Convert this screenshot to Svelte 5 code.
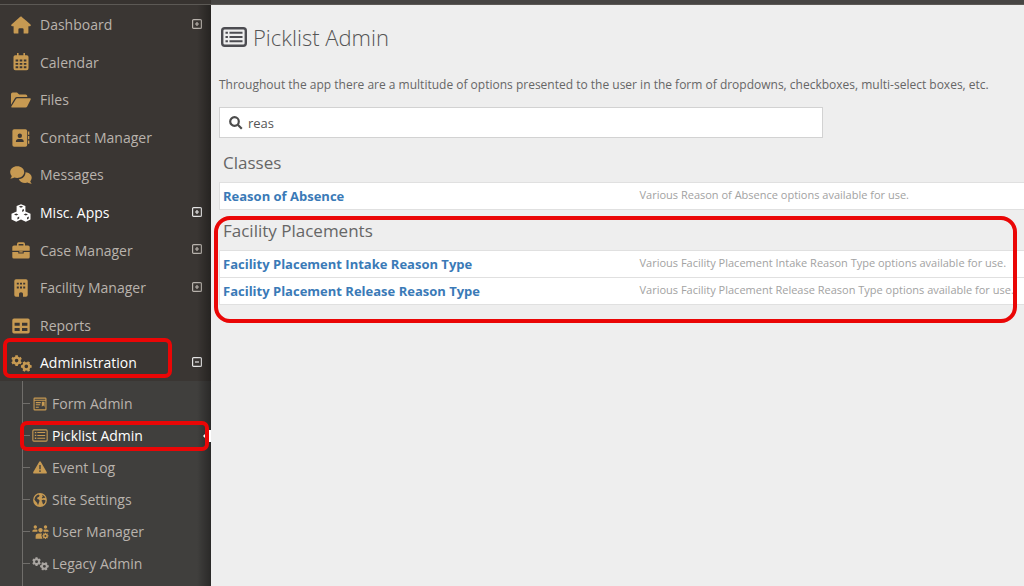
<script lang="ts">
  type NavItem = { label: string; icon: string; expandable?: boolean; bright?: boolean };

  const nav: NavItem[] = [
    { label: "Dashboard", icon: "home", expandable: true },
    { label: "Calendar", icon: "calendar" },
    { label: "Files", icon: "folder" },
    { label: "Contact Manager", icon: "contacts" },
    { label: "Messages", icon: "comments" },
    { label: "Misc. Apps", icon: "cubes", expandable: true, bright: true },
    { label: "Case Manager", icon: "briefcase", expandable: true },
    { label: "Facility Manager", icon: "building", expandable: true },
    { label: "Reports", icon: "table" },
  ];

  const adminNav: NavItem[] = [
    { label: "Form Admin", icon: "form" },
    { label: "Picklist Admin", icon: "list" },
    { label: "Event Log", icon: "warning" },
    { label: "Site Settings", icon: "globe" },
    { label: "User Manager", icon: "users" },
    { label: "Legacy Admin", icon: "cogs" },
  ];

  const groups = [
    { title: "Classes", lists: ["Reason of Absence"] },
    {
      title: "Facility Placements",
      marked: true,
      lists: ["Facility Placement Intake Reason Type", "Facility Placement Release Reason Type"],
    },
  ];

  let query = $state("reas");
  let adminOpen = $state(true);
  let current = $state("Picklist Admin");

  const visible = $derived(
    groups
      .map((g) => ({ ...g, lists: g.lists.filter((l) => l.toLowerCase().includes(query.toLowerCase())) }))
      .filter((g) => g.lists.length > 0),
  );

  // Toothed wheel with a round hole, drawn with fill-rule evenodd.
  function gear(cx: number, cy: number, r: number, teeth: number, turn = 0): string {
    const pts: string[] = [];
    const step = (Math.PI * 2) / teeth;
    for (let i = 0; i < teeth; i++) {
      const a = i * step + turn;
      for (const [da, k] of [[-0.3, 0.78], [-0.22, 1], [0.22, 1], [0.3, 0.78]]) {
        const x = cx + Math.cos(a + da * step) * r * k;
        const y = cy + Math.sin(a + da * step) * r * k;
        pts.push(`${x.toFixed(2)} ${y.toFixed(2)}`);
      }
    }
    const h = r * 0.33;
    return `M${pts.join("L")}ZM${cx - h} ${cy}a${h} ${h} 0 1 0 ${h * 2} 0a${h} ${h} 0 1 0 ${-h * 2} 0Z`;
  }

  const icons: Record<string, { w: number; h: number; d: string }> = {
    home: { w: 20, h: 18, d: "M10 .3 12.2 2.2 15 4.6 19.5 8.6Q20.3 10 18.8 10.2H17.4V16.4Q17.4 17.6 16.2 17.6H12.6V13.4Q12.6 12.2 11.4 12.2H8.6Q7.4 12.2 7.4 13.4V17.6H3.8Q2.6 17.6 2.6 16.4V10.2H1.2Q-.3 10 .5 8.6L9.2.8Q10 0 10.8.8Z" },
    calendar: { w: 16, h: 18, d: "M4 0h1.6v2.2h4.8V0H12v2.2h1.8q1.7 0 1.7 1.7V15.3q0 1.9-1.9 1.9H2.4Q.5 17.2.5 15.3V3.9q0-1.7 1.7-1.7H4ZM2.6 6.4v2h2.6v-2ZM6.7 6.4v2h2.6v-2ZM10.8 6.4v2h2.6v-2ZM2.6 9.9v1.9h2.6V9.9ZM6.7 9.9v1.9h2.6V9.9ZM10.8 9.9v1.9h2.6V9.9ZM2.6 13.3v1.9h2.6v-1.9ZM6.7 13.3v1.9h2.6v-1.9ZM10.8 13.3v1.9h2.6v-1.9Z" },
    folder: { w: 20, h: 16, d: "M0 2.2Q0 .5 1.7.5H6l2.2 2h6.4q1.7 0 1.7 1.7v.9H6Q4.6 5.1 3.9 6.3L0 12.8ZM5 6.9Q5.4 6.2 6.2 6.2h12.7q1.3 0 .8 1.2l-3.5 7q-.5 1-1.6 1H1.2q-1.3 0-.7-1.1Z" },
    contacts: { w: 18, h: 18, d: "M2.2.3h11.2q1.8 0 1.8 1.8v13.8q0 1.8-1.8 1.8H2.2Q.4 17.7.4 15.9V2.1Q.4.3 2.2.3ZM7.8 4.6a2.2 2.2 0 1 0 0 4.4a2.2 2.2 0 1 0 0-4.4ZM3.9 13.1h7.8v-.6q0-2.5-2.5-2.5H6.4q-2.5 0-2.5 2.5ZM16 2.6h1.3v3.2H16ZM16 7.1h1.3v3.2H16ZM16 11.6h1.3v3.2H16Z" },
    comments: { w: 22, h: 18, d: "M7.2.2c4 0 7 2.6 7 5.8s-3 5.9-7 5.9c-1.1 0-2.1-.2-3-.5C3.1 12.1 1.7 12.6.2 12.6c.8-.8 1.4-1.6 1.5-2.7C.8 8.9.2 7.5.2 6 .2 2.8 3.2.2 7.2.2ZM15.5 6.2c3.5.2 6.2 2.5 6.2 5.4 0 1.5-.6 2.7-1.5 3.7.2 1 .8 1.8 1.5 2.4-1.6.1-3-.4-4-1.1-.8.3-1.7.5-2.6.5-3 0-5.4-1.5-6.3-3.8 3.9-.4 6.9-3.4 6.7-7.1Z" },
    cubes: { w: 20, h: 18, d: "M10 .2 14.4 2.1V7.6L19.5 9.8V15.4L14.8 17.7 10 15.5 5.2 17.7.5 15.4V9.8L5.6 7.6V2.1ZM10 1.8 7.8 2.8 10 3.8 12.2 2.8ZM11.2 5.8V7.9L12.9 7.1V5ZM5.2 9.5 3 10.5 5.2 11.5 7.4 10.5ZM6.4 13.4V15.5L8.2 14.6V12.6ZM14.8 9.5 12.6 10.5 14.8 11.5 17 10.5ZM16 13.4V15.5L17.8 14.6V12.6Z" },
    briefcase: { w: 18, h: 17, d: "M5 3.4V1.9Q5 .3 6.6.3h4.8Q13 .3 13 1.9v1.5h3q1.7 0 1.7 1.7v3.6H.3V5.1Q.3 3.4 2 3.4ZM6.6 3.4h4.8V1.9H6.6ZM.3 9.9h6v1.5h5.4V9.9h6v5q0 1.5-1.5 1.5H1.8Q.3 16.4.3 14.9ZM7.3 9.3h3.4v1.2H7.3Z" },
    building: { w: 14, h: 18, d: "M2 .3h10q1.7 0 1.7 1.7v14q0 1.7-1.7 1.7H9V14.7q0-1.5-2-1.5t-2 1.5v3H2Q.3 17.7.3 16V2Q.3.3 2 .3ZM2.8 3.8v1.8h2V3.8ZM6 3.8v1.8h2V3.8ZM9.2 3.8v1.8h2V3.8ZM2.8 7.6v1.8h2V7.6ZM6 7.6v1.8h2V7.6ZM9.2 7.6v1.8h2V7.6Z" },
    table: { w: 18, h: 16, d: "M2 .5h14q1.7 0 1.7 1.7v11.6q0 1.7-1.7 1.7H2Q.3 15.5.3 13.8V2.2Q.3.5 2 .5ZM2.6 4.8v3h5.1v-3ZM10 4.8v3h5.4v-3ZM2.6 10v3h5.1v-3ZM10 10v3h5.4v-3Z" },
    form: { w: 14, h: 14, d: "M1.8.5h10.4q1.3 0 1.3 1.3v10.4q0 1.3-1.3 1.3H1.8Q.5 13.5.5 12.2V1.8Q.5.5 1.8.5ZM1.6 1.7v1h10.8v-1ZM1.6 3.7v8.6h10.8V3.7ZM2.8 5h5v1.2h-5ZM8.8 4.8h2.8v5l-1.4-1.2-1.4 1.2ZM2.8 7.3h4.4v1H2.8ZM2.8 9.7h3v1h-3Z" },
    list: { w: 16, h: 13, d: "M1.9.3h12.2q1.6 0 1.6 1.6v9.2q0 1.6-1.6 1.6H1.9Q.3 12.7.3 11.1V1.9Q.3.3 1.9.3ZM1.9 1.4q-.5 0-.5.5v9.2q0 .5.5.5h12.2q.5 0 .5-.5V1.9q0-.5-.5-.5ZM2.8 3h1.5v1.3H2.8ZM5.3 3.1h7.9v1H5.3ZM2.8 5.8h1.5v1.3H2.8ZM5.3 5.9h7.9v1H5.3ZM2.8 8.6h1.5v1.3H2.8ZM5.3 8.7h7.9v1H5.3Z" },
    warning: { w: 14, h: 13, d: "M6.1.9Q7 -.4 7.9.9L13.7 11q.6 1.5-1 1.6H1.3Q-.3 12.5.3 11ZM6.3 4v4.2h1.4V4ZM7 9.2a.9.9 0 1 0 0 1.8a.9.9 0 1 0 0-1.8Z" },
    globe: { w: 14, h: 14, d: "M7 .1a6.9 6.9 0 1 0 0 13.8A6.9 6.9 0 1 0 7 .1ZM5.2 1.6 6.6 2.2 6 3.8 4.4 4.6 4.2 6 5.8 6.4 6.6 7.8 6 9.6 5 12.2 4 9.8 2.6 8.2 1.4 6.4 2.2 4 3.6 2.4ZM9 1.7 11.2 2.9 12.4 5 10.8 4.8 9.6 5.6 8.8 4.8 9.8 3.6ZM9.2 7 10.8 6.7 12.6 7.6 12 9.8 10.4 11.4 9.4 10 9.4 8.8 8.4 8Z" },
    users: { w: 17, h: 14, d: "M3.3.3a1.7 1.7 0 1 0 .01 0ZM13.5.3a1.7 1.7 0 1 0 .01 0ZM8.5 3a2.2 2.2 0 1 0 .01 0ZM.2 6.7Q.2 4.4 2.5 4.4H4.5L5.5 5 5.3 6.7ZM11.7 6.7 11.5 5 12.5 4.4H14.5Q16.8 4.4 16.8 6.7ZM3.6 13.7V11.6Q3.6 8.4 6.4 8.4H10L9.4 10.5 10.5 13.7Z" + gear(13.4, 10.9, 3.1, 8) },
    cogs: { w: 21, h: 17, d: gear(5.6, 5.6, 5.5, 6, 0.52) + gear(15.3, 11.4, 5.5, 6, 0) },
  };
</script>

{#snippet icon(name: string)}
  <svg
    class="glyph"
    viewBox="0 0 {icons[name].w} {icons[name].h}"
    width={icons[name].w}
    height={icons[name].h}
    aria-hidden="true"
  >
    <path fill-rule="evenodd" d={icons[name].d} />
  </svg>
{/snippet}

{#snippet toggleBox(open: boolean)}
  <svg viewBox="0 0 10 10" width="10" height="10" aria-hidden="true">
    <rect class="box" x=".6" y=".6" width="8.8" height="8.8" rx="1" />
    <path class="box" d={open ? "M3 5h4" : "M3 5h4M5 3v4"} />
  </svg>
{/snippet}

<div class="app">
  <header class="topbar"></header>

  <aside class="sidebar">
    <nav aria-label="Main">
      <ul class="menu">
        {#each nav as item}
          <li class="item" class:bright={item.bright}>
            <a href="#{item.icon}">
              <span class="icon">{@render icon(item.icon)}</span>
              {item.label}
            </a>
            {#if item.expandable}
              <button class="toggle" aria-label="Expand {item.label}">{@render toggleBox(false)}</button>
            {/if}
          </li>
        {/each}
        <li class="item open">
          <a href="#administration">
            <span class="icon">{@render icon("cogs")}</span>
            Administration
          </a>
          <button
            class="toggle"
            aria-label="Toggle Administration"
            aria-expanded={adminOpen}
            onclick={() => (adminOpen = !adminOpen)}
          >
            {@render toggleBox(adminOpen)}
          </button>
          <span class="mark mark-parent"></span>
        </li>
      </ul>
      {#if adminOpen}
        <ul class="submenu">
          {#each adminNav as item}
            <li class="subitem" class:current={item.label === current} class:legacy={item.icon === "cogs"}>
              <a href="#{item.icon}" onclick={() => (current = item.label)}>
                <span class="icon">{@render icon(item.icon)}</span>
                {item.label}
              </a>
              {#if item.label === current}
                <svg class="pointer" viewBox="0 0 8 14" width="8" height="14" aria-hidden="true">
                  <path d="M0 7 6 1h2v12H6Z" />
                </svg>
                <span class="mark mark-child"></span>
              {/if}
            </li>
          {/each}
        </ul>
      {/if}
    </nav>
  </aside>

  <main>
    <h1>
      <svg class="title-icon" viewBox="0 0 26 20" width="26" height="20" aria-hidden="true">
        <rect x="1.2" y="1.2" width="23.6" height="17.6" rx="2.5" />
        <path d="M4.5 5.8h2.4M4.5 10h2.4M4.5 14.2h2.4M8.5 5.8h13M8.5 10h13M8.5 14.2h13" />
      </svg>
      Picklist Admin
    </h1>
    <p class="intro">
      Throughout the app there are a multitude of options presented to the user in the form of dropdowns, checkboxes,
      multi-select boxes, etc.
    </p>

    <label class="search">
      <svg viewBox="0 0 14 14" width="14" height="14" aria-hidden="true">
        <circle cx="5.5" cy="5.5" r="4.3" />
        <path d="M8.8 8.8 12.8 12.8" />
      </svg>
      <input type="text" aria-label="Search picklists" bind:value={query} />
    </label>

    {#each visible as group}
      <section class:marked={group.marked}>
        <h2>{group.title}</h2>
        <ul class="lists">
          {#each group.lists as name}
            <li>
              <a href="#picklist">{name}</a>
              <span>Various {name} options available for use.</span>
            </li>
          {/each}
        </ul>
      </section>
    {/each}
  </main>
</div>

<style>
  :global(body) {
    background: #eeeeee;
  }
  .app {
    --gold: #c79a52;
    --red: #ea0606;
    display: grid;
    grid-template-columns: 211px minmax(0, 1fr);
    grid-template-rows: 5px 1fr;
    min-height: 100vh;
    overflow: hidden;
    font-family: "Open Sans", "Noto Sans", sans-serif;
    font-size: 13px;
    color: #666;
  }
  ul {
    list-style: none;
    margin: 0;
    padding: 0;
  }
  a {
    text-decoration: none;
  }
  .topbar {
    grid-column: 1 / -1;
    box-sizing: border-box;
    background: linear-gradient(to right, #373330 211px, #474543 211px);
    border-bottom: 1px solid #5c5955;
  }
  .sidebar {
    position: relative;
    background: #3a3633;
    font-size: 14px;
  }
  /* shade along the right edge */
  .sidebar::after {
    content: "";
    position: absolute;
    inset: 0 0 0 auto;
    width: 14px;
    background: linear-gradient(to right, transparent, rgba(0, 0, 0, 0.35));
    pointer-events: none;
  }
  nav {
    display: flex;
    flex-direction: column;
    min-height: 100%;
  }
  .item {
    position: relative;
    display: flex;
    align-items: center;
    line-height: 1.4;
  }
  .item a {
    flex: 1;
    display: flex;
    align-items: center;
    padding: 10px 0 8px 10px;
    color: #b9b3ad;
  }
  .item .icon {
    width: 22px;
    margin-right: 8px;
  }
  .icon {
    display: flex;
    justify-content: center;
    align-items: center;
    height: 18px;
    flex: none;
  }
  .glyph {
    fill: var(--gold);
    flex: none;
  }
  .item.bright a,
  .item.open a {
    color: #fff;
  }
  .bright .glyph {
    fill: #fff;
  }
  .toggle {
    display: flex;
    margin: 0 9px 0 0;
    padding: 0;
    border: 0;
    background: none;
    cursor: pointer;
  }
  .box {
    fill: none;
    stroke: #b9b3ad;
    stroke-width: 1.2;
  }
  .bright .box,
  .open .box {
    stroke: #e6e6e6;
  }
  .submenu {
    position: relative;
    flex: 1;
    padding: 7px 0 6px;
    background: #403f3d;
  }
  .submenu::before {
    content: "";
    position: absolute;
    inset: 0 auto 0 22px;
    width: 1px;
    background: #706e6b;
  }
  .subitem {
    position: relative;
    line-height: 20px;
  }
  .subitem::before {
    content: "";
    position: absolute;
    left: 23px;
    top: 15px;
    width: 7px;
    height: 1px;
    background: #706e6b;
  }
  .subitem a {
    display: flex;
    align-items: center;
    padding: 6px 0 6px 31px;
    color: #b9b3ad;
  }
  .subitem.current a {
    color: #fff;
  }
  .subitem .icon {
    width: 18px;
    margin-right: 3px;
  }
  .legacy .glyph {
    width: 17px;
    height: 14px;
    fill: #a9a5a1;
  }
  .pointer {
    position: absolute;
    right: 0;
    top: 9px;
    fill: #fff;
    z-index: 1;
  }
  .mark {
    position: absolute;
    z-index: 2;
    box-sizing: border-box;
    border: 4px solid var(--red);
    border-radius: 7px;
    pointer-events: none;
  }
  .mark-parent {
    inset: -5px 39px 3px 3px;
  }
  .mark-child {
    inset: 1px 2px 1px 20px;
  }
  main {
    padding: 14px 0 16px 8px;
  }
  h1,
  h2 {
    margin: 0;
    font-weight: 400;
  }
  h1 {
    display: flex;
    align-items: center;
    gap: 6px;
    padding-left: 2px;
    font-size: 22px;
    font-weight: 300;
    line-height: 36px;
    color: #555;
  }
  .title-icon {
    fill: none;
    stroke: #4c4c51;
    stroke-width: 2.4;
  }
  .title-icon path {
    stroke-width: 2;
  }
  .intro {
    margin: 20px 0 12px;
    font-size: 12px;
    line-height: 20px;
  }
  .search {
    display: flex;
    align-items: center;
    gap: 5px;
    box-sizing: border-box;
    width: 75%;
    height: 31px;
    padding: 0 9px;
    background: #fff;
    border: 1px solid #d2d2d2;
  }
  .search svg {
    flex: none;
    fill: none;
    stroke: #4c4c4c;
    stroke-width: 2.2;
  }
  .search input {
    flex: 1;
    min-width: 0;
    padding: 0;
    border: 0;
    outline: 0;
    background: none;
    font: inherit;
    color: #555;
  }
  section {
    position: relative;
  }
  .search + section {
    margin-top: 4px;
  }
  h2 {
    padding: 1px 0 0 4px;
    font-size: 17px;
    line-height: 39px;
  }
  .lists {
    border: 1px solid #e0e0e0;
    border-right: 0;
    background: #fff;
  }
  .lists li {
    display: grid;
    grid-template-columns: 52% 1fr;
    align-items: start;
    padding-left: 3px;
    line-height: 26px;
  }
  .lists li + li {
    border-top: 1px solid #e0e0e0;
  }
  .lists a {
    font-weight: 700;
    color: #3a7ab7;
  }
  .lists span {
    font-size: 11px;
    line-height: 24px;
    color: #a2a2a2;
    white-space: nowrap;
  }
  .marked::after {
    content: "";
    position: absolute;
    inset: 6px 7px -18px -5px;
    border: 4px solid var(--red);
    border-radius: 16px;
    pointer-events: none;
  }
</style>
